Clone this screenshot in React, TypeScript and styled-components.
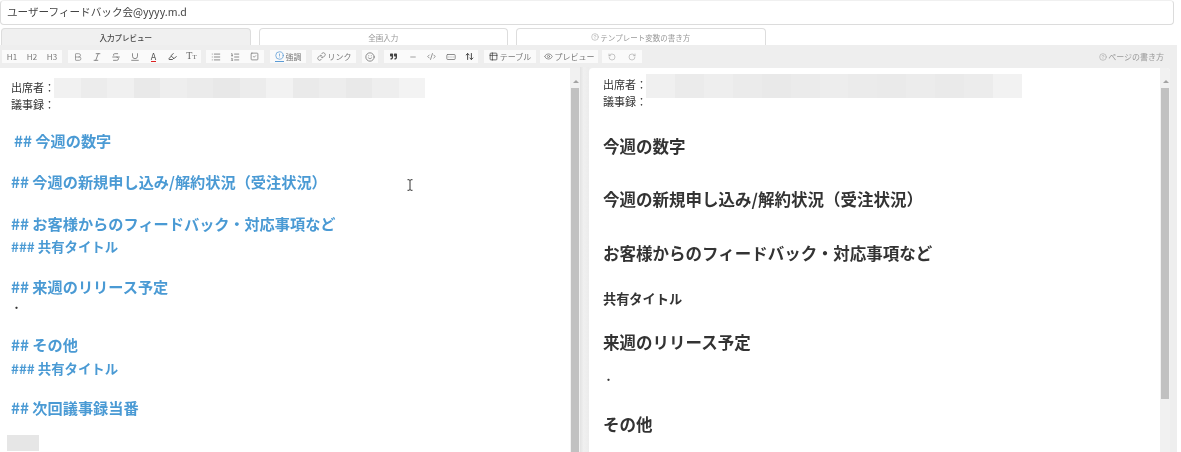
import { ReactNode } from "react"
import styled, { createGlobalStyle } from "styled-components"
import {
  ArrowUpDown,
  Bold,
  CircleAlert,
  CircleHelp,
  CodeXml,
  Eye,
  Highlighter,
  Italic,
  Link,
  List,
  ListOrdered,
  Minus,
  RectangleEllipsis,
  RotateCcw,
  RotateCw,
  Smile,
  SquareCheck,
  Strikethrough,
  Table2,
  Underline,
} from "lucide-react"
import { FaQuoteRight } from "react-icons/fa"

const GlobalStyle = createGlobalStyle`
  html, body {
    margin: 0;
    padding: 0;
    height: 452px;
    overflow: hidden;
    background: #fff;
  }
  body {
    font-family: "Noto Sans CJK JP", "Noto Sans", sans-serif;
    color: #333;
  }
`

const leftTones = ["#f1f1f1", "#ececec", "#f0f0f0", "#e9e9e9", "#eeeeee", "#ebebeb", "#e8e8e8", "#ececec", "#f2f2f2", "#eaeaea", "#ededed", "#e9e9e9", "#eeeeee", "#f3f3f3"]
const rightTones = ["#f0f0f0", "#ebebeb", "#eeeeee", "#ebebeb", "#e9e9e9", "#ebebeb", "#ededed", "#ebebeb", "#eaeaea", "#ececec", "#eaeaea", "#ececec", "#f2f2f2"]

const ToolButton = ({ children, $w }: { children: ReactNode; $w: number }) => (
  <Button $w={$w}>{children}</Button>
)

const Help = () => <CircleHelp size={8} strokeWidth={1.5} />

export default function App() {
  return (
    <Page>
      <GlobalStyle />
      <TitleInput>ユーザーフィードバック会@yyyy.m.d</TitleInput>

      <Tabs>
        <Tab $active>入力プレビュー</Tab>
        <Tab>全画入力</Tab>
        <Tab>
          <Help />
          テンプレート変数の書き方
        </Tab>
      </Tabs>

      <Toolbar>
        <Group $gap={6}>
          <ToolButton $w={20}>H1</ToolButton>
          <ToolButton $w={20}>H2</ToolButton>
          <ToolButton $w={20}>H3</ToolButton>
        </Group>
        <Group>
          <ToolButton $w={19}><Bold size={10} strokeWidth={1.6} /></ToolButton>
          <ToolButton $w={19}><Italic size={10} /></ToolButton>
          <ToolButton $w={19}><Strikethrough size={10} /></ToolButton>
          <ToolButton $w={19}><Underline size={10} /></ToolButton>
          <ToolButton $w={19}><ColorA>A</ColorA></ToolButton>
          <ToolButton $w={19}><Highlighter size={9} strokeWidth={2.6} color="#555" /></ToolButton>
          <ToolButton $w={19}><TextSize>T<small>T</small></TextSize></ToolButton>
        </Group>
        <Group $gap={6}>
          <ToolButton $w={19}><List size={10} /></ToolButton>
          <ToolButton $w={19}><ListOrdered size={10} /></ToolButton>
          <ToolButton $w={20}><SquareCheck size={9} /></ToolButton>
        </Group>
        <Group $gap={6}>
          <ToolButton $w={36}>
            <Emphasis><CircleAlert size={9} /></Emphasis>
            強調
          </ToolButton>
        </Group>
        <Group $gap={6}>
          <ToolButton $w={44}>
            <Link size={9} />
            リンク
          </ToolButton>
        </Group>
        <Group $gap={6}>
          <ToolButton $w={16}><Smile size={10} /></ToolButton>
        </Group>
        <Group $gap={6}>
          <ToolButton $w={19}><FaQuoteRight size={7} color="#444" /></ToolButton>
          <ToolButton $w={19}><Minus size={8} /></ToolButton>
          <ToolButton $w={19}><CodeXml size={9} /></ToolButton>
          <ToolButton $w={19}><RectangleEllipsis size={10} /></ToolButton>
          <ToolButton $w={18}><ArrowUpDown size={9} strokeWidth={2.6} color="#444" /></ToolButton>
        </Group>
        <Group $gap={4}>
          <ToolButton $w={52}>
            <Table2 size={9} color="#444" />
            テーブル
          </ToolButton>
        </Group>
        <Group $gap={4}>
          <ToolButton $w={58}>
            <Eye size={9} />
            プレビュー
          </ToolButton>
        </Group>
        <Group $gap={4}>
          <ToolButton $w={20}><RotateCcw size={8} color="#aaa" /></ToolButton>
          <ToolButton $w={20}><RotateCw size={8} color="#aaa" /></ToolButton>
        </Group>
        <PageHelp>
          <Help />
          ページの書き方
        </PageHelp>
      </Toolbar>

      <Panes>
        <Pane>
          <PaneBody $top={11}>
            <Plain>
              出席者：
              <Mask $w={371} $h={20}>
                {leftTones.map((tone, i) => (
                  <MaskCell key={i} $tone={tone} />
                ))}
              </Mask>
            </Plain>
            <Plain>議事録：</Plain>
            <SourceH2 $top={16} $indent={3}>## 今週の数字</SourceH2>
            <SourceH2 $top={19}>## 今週の新規申し込み/解約状況（受注状況）</SourceH2>
            <SourceH2 $top={20}>## お客様からのフィードバック・対応事項など</SourceH2>
            <SourceH3 $top={3}>### 共有タイトル</SourceH3>
            <SourceH2 $top={20}>## 来週のリリース予定</SourceH2>
            <Plain $top={2}>・</Plain>
            <SourceH2 $top={17}>## その他</SourceH2>
            <SourceH3 $top={4}>### 共有タイトル</SourceH3>
            <SourceH2 $top={19}>## 次回議事録当番</SourceH2>
            <NameMask />
            <SourceH2 $top={0}>##</SourceH2>
          </PaneBody>
          <Scrollbar $thumbEnd={452} />
          <Cursor width="8" height="12" viewBox="0 0 8 12">
            <path d="M1.5 .7h1.5l1 .8 1-.8h1.5M4 1.5v9M1.5 11.300h1.500l1-.8 1 .8h1.500" fill="none" stroke="#333" strokeWidth="1" />
          </Cursor>
        </Pane>

        <Gutter />

        <Pane $rounded>
          <PaneBody $top={8} $left={14}>
            <Plain>
              出席者：
              <Mask $w={376} $h={24} $up={2}>
                {rightTones.map((tone, i) => (
                  <MaskCell key={i} $tone={tone} />
                ))}
              </Mask>
            </Plain>
            <Plain>議事録：</Plain>
            <PreviewH2 $top={24}>今週の数字</PreviewH2>
            <PreviewH2 $top={29}>今週の新規申し込み/解約状況（受注状況）</PreviewH2>
            <PreviewH2 $top={30}>お客様からのフィードバック・対応事項など</PreviewH2>
            <PreviewH3 $top={25}>共有タイトル</PreviewH3>
            <PreviewH2 $top={22}>来週のリリース予定</PreviewH2>
            <Plain $top={17}>・</Plain>
            <PreviewH2 $top={24}>その他</PreviewH2>
          </PaneBody>
          <Scrollbar $thumbEnd={331} />
        </Pane>
      </Panes>
    </Page>
  )
}

const Page = styled.div`
  width: 1181px;
  height: 452px;
  overflow: hidden;
  filter: blur(0.25px);
`

const TitleInput = styled.div`
  box-sizing: border-box;
  width: 1174px;
  height: 25px;
  padding-left: 6px;

  border: 1px solid #dcdcdc;
  border-top-color: #f0f0f0;
  border-radius: 4px;

  color: #444;
  font-size: 10.6px;
  line-height: 22px;
  white-space: nowrap;
`

const Tabs = styled.div`
  display: flex;
  gap: 8px;
  height: 17px;
  margin: 3px 0 0 1px;
`

const Tab = styled.div<{ $active?: boolean }>`
  box-sizing: border-box;
  display: flex;
  align-items: center;
  justify-content: center;
  gap: 1px;
  width: 249.5px;
  height: 17px;

  border: 1px solid #ddd;
  border-bottom: 0;
  border-radius: 4px 4px 0 0;
  background: ${({ $active }) => ($active ? "#f0f0f0" : "#fff")};

  color: ${({ $active }) => ($active ? "#444" : "#999")};
  font-size: 7.5px;
  font-weight: ${({ $active }) => ($active ? 500 : 400)};
`

const Toolbar = styled.div`
  box-sizing: border-box;
  display: flex;
  align-items: center;
  width: 1177px;
  height: 22px;
  padding: 1px 13px 0 2px;

  background: #eeeeee;
`

const Group = styled.div<{ $gap?: number }>`
  display: flex;
  height: 13px;
  margin-right: ${({ $gap }) => $gap ?? 5}px;

  background: #fafafa;
`

const Button = styled.div<{ $w: number }>`
  display: flex;
  align-items: center;
  justify-content: center;
  gap: 2px;
  width: ${({ $w }) => $w}px;

  color: #777;
  font-size: 8px;
  white-space: nowrap;
`

const ColorA = styled.span`
  box-sizing: content-box;
  height: 9px;
  border-bottom: 1.5px solid #d22;
  color: #555;
  font-size: 9px;
  line-height: 9px;
`

const TextSize = styled.span`
  color: #666;
  font-family: "Liberation Serif", serif;
  font-size: 10px;
  line-height: 10px;

  small {
    font-size: 7px;
  }
`

const Emphasis = styled.span`
  display: flex;
  height: 10px;
  border-bottom: 1px solid #5b9bd5;
  color: #5b9bd5;
`

const PageHelp = styled.div`
  display: flex;
  align-items: center;
  gap: 1px;
  margin-left: auto;

  color: #999;
  font-size: 8px;
`

const Panes = styled.div`
  display: grid;
  grid-template-columns: 580px 9px 581px;
  width: 1177px;
  height: 385px;
  background: #eeeeee;
`

const Pane = styled.div<{ $rounded?: boolean }>`
  position: relative;
  display: flex;
  overflow: hidden;
  background: #fff;
  border-radius: ${({ $rounded }) => ($rounded ? "4px 4px 0 0" : "0")};
  margin-top: 1px;
`

const PaneBody = styled.div<{ $top: number; $left?: number }>`
  flex: 1;
  min-width: 0;
  padding: ${({ $top }) => $top}px 0 0 ${({ $left }) => $left ?? 11}px;
`

const Plain = styled.div<{ $top?: number }>`
  display: flex;
  height: 17px;
  margin-top: ${({ $top }) => $top ?? 0}px;

  color: #333;
  font-size: 11px;
  line-height: 17px;
`

const Mask = styled.div<{ $w: number; $h: number; $up?: number }>`
  display: flex;
  flex: none;
  width: ${({ $w }) => $w}px;
  height: ${({ $h }) => $h}px;
  margin: -${({ $up }) => $up ?? 1}px 0 0 -1px;
`

const MaskCell = styled.div<{ $tone: string }>`
  flex: 1;
  background: ${({ $tone }) => $tone};
`

const NameMask = styled.div`
  width: 32px;
  height: 16px;
  margin: 17px 0 -4px -4px;
  background: #e6e6e6;
`

const SourceH2 = styled.div<{ $top: number; $indent?: number }>`
  height: 22px;
  margin: ${({ $top }) => $top}px 0 0 ${({ $indent }) => $indent ?? 0}px;

  color: #4a9ad4;
  font-size: 15.2px;
  font-weight: 700;
  line-height: 22px;
  white-space: nowrap;
`

const SourceH3 = styled.div<{ $top: number }>`
  height: 18px;
  margin-top: ${({ $top }) => $top}px;

  color: #4a9ad4;
  font-size: 13.400px;
  font-weight: 700;
  line-height: 18px;
  white-space: nowrap;
`

const PreviewH2 = styled.div<{ $top: number }>`
  height: 24px;
  margin-top: ${({ $top }) => $top}px;

  color: #333;
  font-size: 16.500px;
  font-weight: 700;
  line-height: 24px;
  white-space: nowrap;
`

const PreviewH3 = styled.div<{ $top: number }>`
  height: 18px;
  margin-top: ${({ $top }) => $top}px;

  color: #333;
  font-size: 13.200px;
  font-weight: 700;
  line-height: 18px;
`

const Scrollbar = styled.div<{ $thumbEnd: number }>`
  position: relative;
  flex: none;
  box-sizing: border-box;
  width: 10px;
  height: 100%;
  background: #f1f1f1;

  &::before {
    content: "";
    position: absolute;
    top: 12px;
    left: 3px;
    border: 3px solid transparent;
    border-top: 0;
    border-bottom: 3px solid #a3a3a3;
  }

  &::after {
    content: "";
    position: absolute;
    top: 20px;
    left: 1px;
    width: 8px;
    height: ${({ $thumbEnd }) => $thumbEnd - 20}px;
    background: #c1c1c1;
  }
`

const Gutter = styled.div`
  background: linear-gradient(90deg, #e2e2e2, #f0f0f0 40%, #ececec);
`

const Cursor = styled.svg`
  position: absolute;
  top: 111px;
  left: 406px;
`
